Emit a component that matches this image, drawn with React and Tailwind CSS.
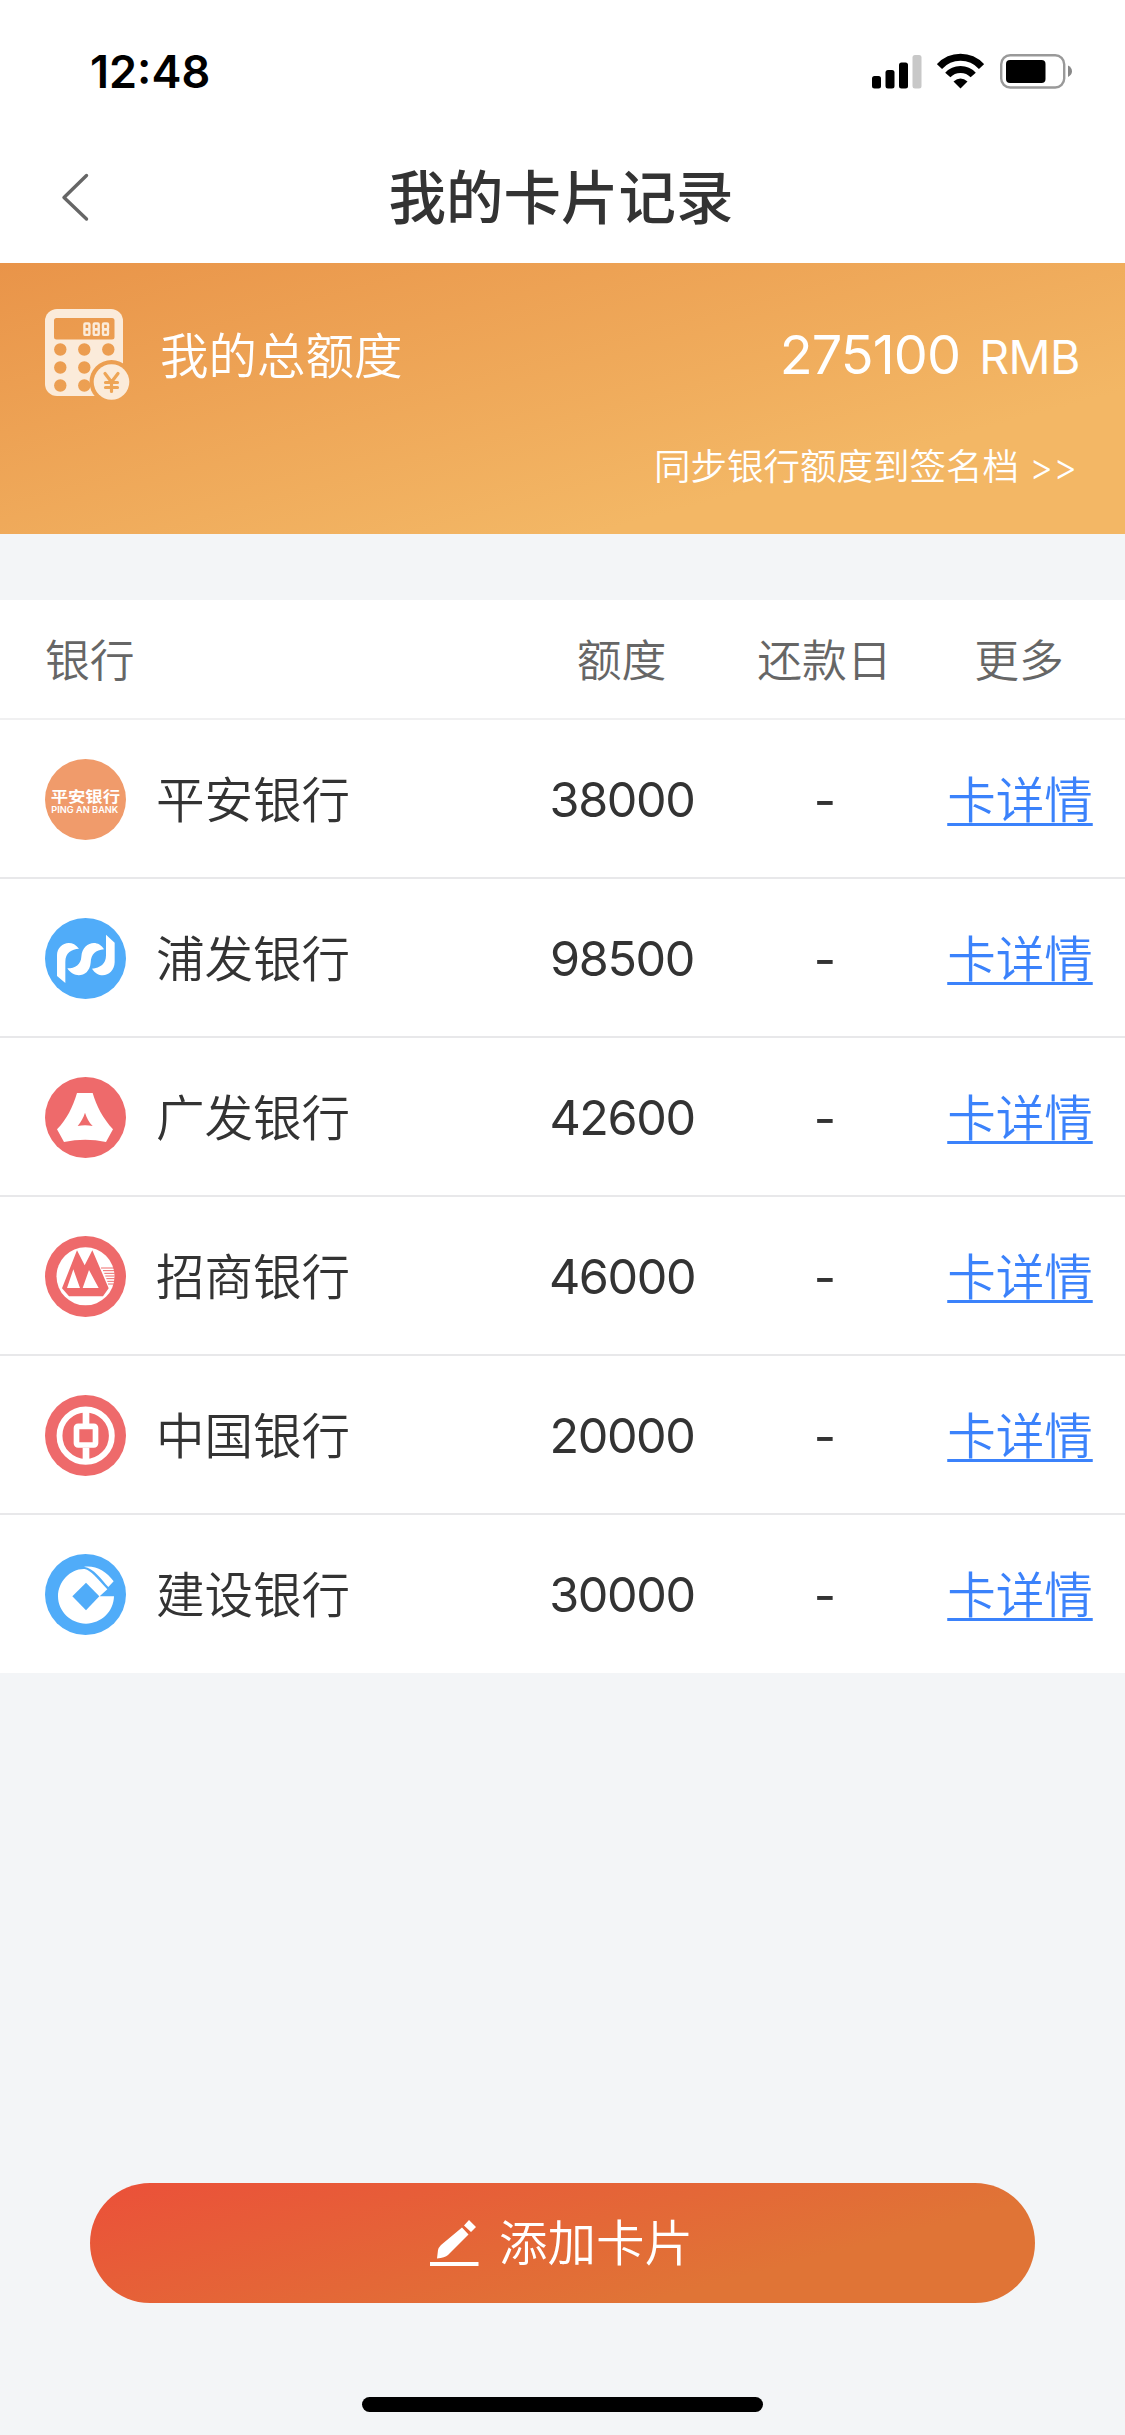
import React from "react";

function StatusIcons() {
  return (
    <div className="flex items-start">
      <svg className="h-9 w-[50px]" viewBox="0 0 50 36" fill="#000">
        <rect x="0" y="23" width="9" height="12.5" rx="2.5" />
        <rect x="13.5" y="17" width="9" height="18.5" rx="2.5" />
        <rect x="27" y="9.5" width="9" height="26" rx="2.5" />
        <rect x="40.5" y="2" width="9" height="33.5" rx="2.5" fill="#c8c8c8" />
      </svg>
      <svg className="ml-[15px] h-9 w-[47px]" viewBox="0 0 47 36" fill="none" stroke="#000">
        <path d="M2.5 13.5 C14 1.2 33 1.2 44.5 13.5" strokeWidth="7" />
        <path d="M10.8 22 C17.5 14.6 29.5 14.6 36.2 22" strokeWidth="7" />
        <path d="M16.5 28.4 Q23.5 22.6 30.5 28.4 L23.5 35.5 Z" fill="#000" stroke="none" />
      </svg>
      <svg className="ml-4 h-9 w-[74px]" viewBox="0 0 74 36">
        <rect x="1.2" y="2.2" width="63" height="32.3" rx="9" fill="none" stroke="#999" strokeWidth="2.4" />
        <rect x="6" y="7" width="39.5" height="23" rx="4" fill="#000" />
        <path d="M68 12.5 Q72 14.5 72 18.3 Q72 22 68 24Z" fill="#888" />
      </svg>
    </div>
  );
}

function CalculatorIcon() {
  return (
    <svg className="h-[93px] w-[85px]" viewBox="0 0 85 93">
      <defs>
        <mask id="calc">
          <rect width="85" height="93" fill="#fff" />
          <rect x="9" y="9" width="60.5" height="21.5" rx="2.5" fill="#000" />
          {[40.5, 58.5, 76.5].map((y) =>
            [15.3, 39.3, 63.3].map((x) => <circle key={`${x}-${y}`} cx={x} cy={y} r="6.2" fill="#000" />)
          )}
          <circle cx="66.5" cy="73" r="22" fill="#000" />
        </mask>
      </defs>
      <rect width="78" height="87" rx="12" fill="#fbebda" mask="url(#calc)" />
      <g fill="none" stroke="#fbebda" strokeWidth="2.4">
        {[39.4, 48.7, 58].map((x) => (
          <g key={x}>
            <rect x={x} y="14.5" width="5" height="5.7" rx="1" />
            <rect x={x} y="20.2" width="5" height="5.7" rx="1" />
          </g>
        ))}
      </g>
      <circle cx="66.5" cy="73" r="17.8" fill="#fbebda" />
      <path d="M60 64.5 L66.5 73 L73 64.5 M66.5 73 V82.5 M60.5 73.5 H72.5 M60.5 78.5 H72.5" fill="none" stroke="#eea556" strokeWidth="3.2" strokeLinecap="round" />
    </svg>
  );
}

function Logo({ color, children }) {
  return (
    <svg className="h-[81px] w-[81px] shrink-0" viewBox="0 0 243 243">
      <circle cx="121.5" cy="121.5" r="121.5" fill={color} />
      {children}
    </svg>
  );
}

function PingAnLogo() {
  return (
    <Logo color="#f09b6b">
      <text x="17" y="128" textLength="208" lengthAdjust="spacingAndGlyphs" fontSize="46" fontWeight="700" fill="#fff" className="font-['Noto_Sans_CJK_SC',sans-serif]">平安银行</text>
      <text x="19" y="162" textLength="201" lengthAdjust="spacingAndGlyphs" fontSize="26" fontWeight="600" fill="#fff" className="font-[Inter,sans-serif]">PING AN BANK</text>
    </Logo>
  );
}

function PudongLogo() {
  return (
    <Logo color="#50acf9">
      <g fill="#fff">
        <path d="M36 174 V112 C36 76 79 60 102 92 C80 93 61 104 61 132 V195 Z" />
        <path d="M67 151 C91 151 108 139 109 116 C112 73 158 61 177 94 C152 96 138 108 137 134 C133 177 88 184 67 151 Z" />
        <path d="M141 152 C166 150 183 138 183 112 V50 L209 74 V133 C208 172 163 187 141 152 Z" />
      </g>
    </Logo>
  );
}

function GuangfaLogo() {
  return (
    <Logo color="#ee6a6b">
      <path fillRule="evenodd" fill="#fff" d="M96 48 H143 C154 87 174 124 204 157 L183 195 Q121 181 57 195 L36 157 C66 126 83 91 96 48 Z M120 107 C115 122 108 135 98 147 Q120 143 143 147 C132 136 125 123 120 107 Z" />
    </Logo>
  );
}

function MerchantsLogo() {
  return (
    <Logo color="#ee6a6b">
      <circle cx="121.5" cy="121" r="87" fill="#fff" />
      <path d="M51 157 L96 43 L119 88 L142 43 L191 157 L174 181 H72 Z" fill="#ee6a6b" />
      <path d="M66 156 L85 100 L105 156 Z M113 156 L132 102 L161 156 Z" fill="#fff" />
      <path d="M168 96 H208 M174 104 H208 M178 112 H209 M181 120 H209 M184 128 H209 M187 136 H208 M189 144 H206" stroke="#ee6a6b" strokeWidth="3" />
    </Logo>
  );
}

function ChinaLogo() {
  return (
    <Logo color="#ee6a6b">
      <circle cx="122" cy="122" r="78.5" fill="none" stroke="#fff" strokeWidth="17.5" />
      <path d="M123 38 V88 M123 158 V206" stroke="#fff" strokeWidth="20" />
      <rect x="94.5" y="94" width="57" height="56" rx="5" fill="none" stroke="#fff" strokeWidth="17" />
    </Logo>
  );
}

function ConstructionLogo() {
  return (
    <Logo color="#50acf9">
      <path fill="#fff" d="M164 127 H207 C206 173 168 209 123 209 C76 209 39 171 39 127 C39 82 77 43 119 45 C139 50 153 70 187 106 L164 127 Z" />
      <path fill="#fff" d="M117 38 C151 33 185 51 206 82 L190 99 C170 77 146 42 117 38 Z" />
      <path fill="#50acf9" d="M123 86 L163 127 L123 169 L82 127 Z" />
    </Logo>
  );
}

const banks = [
  { name: "平安银行", amount: "38000", Icon: PingAnLogo },
  { name: "浦发银行", amount: "98500", Icon: PudongLogo },
  { name: "广发银行", amount: "42600", Icon: GuangfaLogo },
  { name: "招商银行", amount: "46000", Icon: MerchantsLogo },
  { name: "中国银行", amount: "20000", Icon: ChinaLogo },
  { name: "建设银行", amount: "30000", Icon: ConstructionLogo },
];

export default function App() {
  return (
    <div className="flex h-[2435px] w-[1125px] flex-col bg-[#f3f5f7] font-[Inter,'Noto_Sans_CJK_SC',sans-serif] text-[#333]">
      <header className="h-[263px] shrink-0 bg-white">
        <div className="flex h-[132px] items-start justify-between pl-[90px] pr-[51px] pt-[53px]">
          <span className="text-[45px] font-semibold leading-[37px] text-black">12:48</span>
          <StatusIcons />
        </div>
        <div className="grid h-[131px] grid-cols-[150px_1fr_153px] items-center">
          <svg className="mb-0.5 ml-[61px] h-[50px] w-[29px]" viewBox="0 0 29 50" fill="none" stroke="#666" strokeWidth="3.4" strokeLinecap="round" strokeLinejoin="round">
            <path d="M25.5 3.5 L3 25.5 L25.5 47" />
          </svg>
          <h1 className="pt-[3px] text-center text-[57.5px] font-medium leading-none">我的卡片记录</h1>
        </div>
      </header>

      <section className="h-[271px] shrink-0 bg-[linear-gradient(165deg,#e99449_0%,#f3b765_75%)] pt-[46px] text-white">
        <div className="flex h-[93px] items-center pl-[45px] pr-[45px]">
          <CalculatorIcon />
          <span className="ml-[30px] pt-[3px] text-[48.5px] font-[350] leading-none">我的总额度</span>
          <span className="ml-auto pb-0.5 text-[54px] leading-none tracking-[-0.9px]">275100<span className="ml-[19px] text-[46.5px] tracking-[-0.5px]">RMB</span></span>
        </div>
        <div className="mt-[45px] pr-[48px] text-right text-[36.5px] font-[350] leading-[40px]">同步银行额度到签名档 &gt;&gt;</div>
      </section>

      <section className="mt-[66px] shrink-0 bg-white">
        <div className="grid h-[120px] grid-cols-[520px_204px_202px_188px] items-center border-b-2 border-[#f0f0f1] pt-1 text-center text-[44.8px] font-[350] leading-none text-[#666]">
          <span className="pl-[45px] text-left">银行</span>
          <span className="pr-px">额度</span>
          <span className="pr-px">还款日</span>
          <span className="pr-0.5">更多</span>
        </div>
        {banks.map(({ name, amount, Icon }) => (
          <div key={name} className="grid h-[159px] grid-cols-[520px_204px_202px_188px] items-center border-b-2 border-[#e8e8ea] pt-0.5 text-center text-[48.5px] leading-none last:h-[158px] last:border-b-0 last:pb-0.5">
            <div className="flex items-center pl-[45px]">
              <Icon />
              <span className="ml-[30px] pt-1 font-[350]">{name}</span>
            </div>
            <span className="pt-0.5 tracking-[-1.4px]">{amount}</span>
            <span className="pt-1">-</span>
            <a className="pt-1 font-[350] text-[#3b82fb] underline decoration-[3px] underline-offset-[5px]">卡详情</a>
          </div>
        ))}
      </section>

      <footer className="mt-auto flex h-[252px] shrink-0 flex-col items-center">
        <button className="flex h-[120px] w-[945px] items-center justify-center rounded-full bg-[linear-gradient(165deg,#eb5039_0%,#e07436_72%)] pr-0.5 text-white">
          <svg className="h-[48px] w-[49px]" viewBox="0 0 49 48" fill="#fff">
            <path d="M7 39.5 L8 31 Q8.6 28.5 11 26 L32 8.5 L38.5 15.5 L18 36 Q15 38.5 7 39.5Z M34 6.5 L39 1 L46 8 L41 13Z M0 43 H48.5 V47 H0Z" />
          </svg>
          <span className="ml-5 pt-[3px] text-[48.5px] font-[350] leading-none">添加卡片</span>
        </button>
        <div className="mt-[94px] h-[15px] w-[401px] rounded-full bg-black" />
      </footer>
    </div>
  );
}
